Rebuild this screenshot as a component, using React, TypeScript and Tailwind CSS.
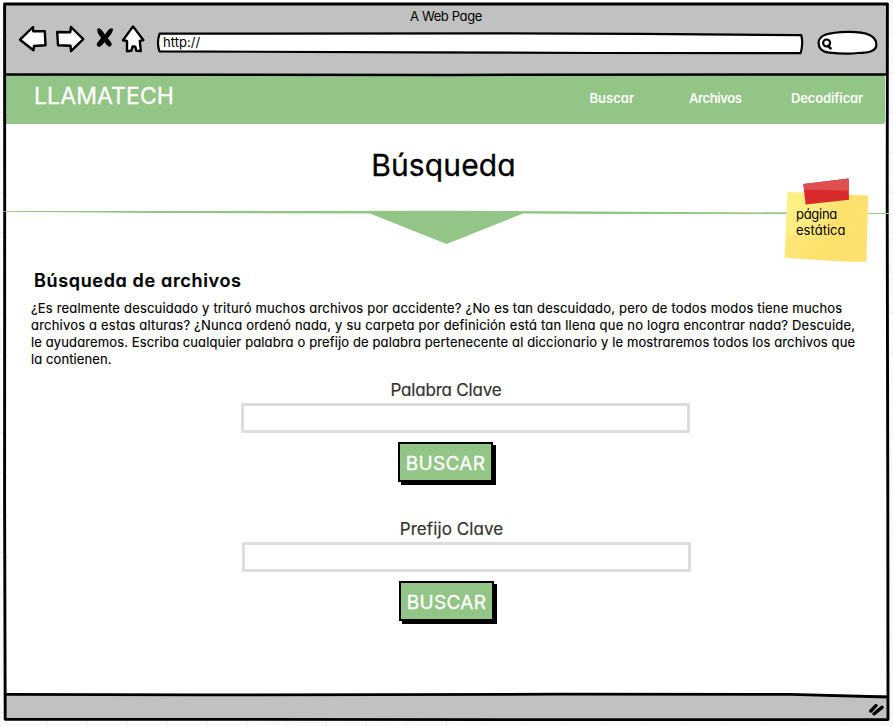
const paragraph = [
  {
    text: "¿Es realmente descuidado y trituró muchos archivos por accidente? ¿No es tan descuidado, pero de todos modos tiene muchos",
    spacing: "tracking-[0.188px]",
  },
  {
    text: "archivos a estas alturas? ¿Nunca ordenó nada, y su carpeta por definición está tan llena que no logra encontrar nada? Descuide,",
    spacing: "tracking-[0.198px]",
  },
  {
    text: "le ayudaremos. Escriba cualquier palabra o prefijo de palabra pertenecente al diccionario y le mostraremos todos los archivos que",
    spacing: "tracking-[0.125px]",
  },
  { text: "la contienen.", spacing: "tracking-[0.1px]" },
];

/* Hand-drawn ink: window outline, header rule and footer rule */
function FrameInk() {
  return (
    <svg
      className="pointer-events-none absolute inset-0"
      width="893"
      height="726"
      viewBox="0 0 893 726"
      fill="none"
      stroke="#000"
      strokeLinejoin="round"
    >
      <path d="M4.6 4 L450 4 L887.4 3.9 L887.2 200 L887.8 500 L888 719.6 L500 719.6 L5.2 719.2 L4.6 500 L4.7 200 Z" strokeWidth="2.9" />
      <path d="M5 74.6 L450 74.9 L887 74.5" strokeWidth="2.5" />
      <path d="M5 694.4 L200 694.9 L560 694.2 L790 694.4 L888 697" strokeWidth="2.8" />
    </svg>
  );
}

function NavIcons() {
  return (
    <svg
      width="130"
      height="32"
      viewBox="17 24 130 32"
      fill="#fff"
      stroke="#000"
      strokeWidth="2.4"
      strokeLinejoin="round"
      strokeLinecap="round"
      className="shrink-0"
    >
      <path d="M20 39.7 L33 27 L33.2 31.2 L44.8 31.2 L45.5 45.3 L34 46 L33.4 50.3 Z" />
      <path d="M57.2 32 L70.2 32.2 L71 27 L83.3 39.2 L71 51.2 L70.5 45.8 L58 45.2 Z" />
      <path
        stroke="none"
        fill="#000"
        d="M97.3 28.8 Q100 27.2 102.4 31 L105 34.6 L108.3 30 Q110.5 27.4 113 28.7 Q113.4 32 107.8 38.2 L111.5 43 Q112.2 45.9 109.6 46.7 Q107 46.4 104.6 42 Q101.5 46.4 98.8 46.9 Q96.2 45.9 97 43.2 L101.1 38 Q96.4 32 97.3 28.8 Z"
      />
      <path d="M133 26.4 L143.3 40 L139.8 41 L140.8 51 L136.3 50.8 L135.3 46.6 L132.6 46.4 L131.3 50.8 L127 51.3 L127 41 L123 40.2 Z" />
    </svg>
  );
}

function AddressBar() {
  return (
    <div className="relative ml-[9px] mt-[7px] flex h-[24px] w-[648px] items-start">
      <svg className="absolute inset-0" width="648" height="24" viewBox="156 31 648 24" fill="#fff" stroke="#000" strokeWidth="2.2" strokeLinejoin="round">
        <path d="M159.6 33.6 L500 33.4 L640 33.8 L801.3 35.2 Q803.4 44 800.6 53.2 L600 53 L420 52.3 L159.5 51.4 Q156.4 43 159.6 33.6 Z" />
      </svg>
      <span className="relative ml-[7px] mt-[3px] text-[13px] leading-4 tracking-[0.05px]">http://</span>
    </div>
  );
}

function SearchPill() {
  return (
    <svg className="ml-[12px] mt-[5px] shrink-0" width="62" height="28" viewBox="816 29 62 28" fill="#fff" stroke="#000" strokeWidth="2.2" strokeLinecap="round">
      <path d="M818.6 43 C818.6 35 828 32.3 848 31.8 C868 31.6 876 36 876.3 44 C877 51.5 868 52.6 858 53 C850 54 838 53.6 829 52.6 C821.5 51.8 818.6 48 818.6 43 Z" />
      <circle cx="826.6" cy="43" r="3.5" />
      <path d="M828 46 L830.6 48.4" strokeWidth="2.6" />
    </svg>
  );
}

function Divider() {
  return (
    <svg className="relative z-10 -ml-[5px] mt-[25px] block shrink-0" width="893" height="36" viewBox="0 210 893 36" fill="#92c586">
      <path d="M3 211 L447 210.8 L889 213 L889 213.9 L600 214 L523 213.6 L446.5 244 L370 213.4 L160 213 L3 211.8 Z" />
    </svg>
  );
}

function StickyNote() {
  return (
    <div className="absolute left-[782px] top-[176px] z-20 h-[90px] w-[90px]">
      <svg className="absolute inset-0" width="90" height="90" viewBox="782 176 90 90">
        <defs>
          <linearGradient id="note" x1="0" y1="0.2" x2="1" y2="0.6">
            <stop offset="0" stopColor="#fff184" />
            <stop offset="0.35" stopColor="#feec7e" />
            <stop offset="0.6" stopColor="#fee16c" />
            <stop offset="1" stopColor="#fee070" />
          </linearGradient>
        </defs>
        <path d="M787.5 192 L868.3 195.6 L866.3 261.8 L845 261.6 L784.6 257.8 Z" fill="url(#note)" />
        <path d="M786.3 235 L822 236 L852 232 L866 242 L866.3 261.8 L845 261.6 L784.6 257.8 Z" fill="#fee06e" opacity="0.6" />
        <path d="M803.3 184 L848.6 178.4 L849 199.8 L805.6 204.6 Z" fill="#db2a2e" />
        <path d="M803.3 184 L848.6 178.4 L848.8 190.5 L804.2 189.8 Z" fill="#df4f4f" />
      </svg>
      <p className="relative ml-[14px] pt-[30px] text-[13px] leading-4">
        <span className="block tracking-[-0.28px]">página</span>
        <span className="block tracking-[0.03px]">estática</span>
      </p>
    </div>
  );
}

function SearchForm({ label, tracking }: { label: string; tracking: string }) {
  return (
    <form className="flex flex-col items-center">
      <label className={`text-[17px] leading-6 text-[#333] [-webkit-text-stroke:0.2px_#333] ${tracking}`}>{label}</label>
      <div className="ml-[39px] mt-px h-[30px] w-[449px] rounded-[1px] border-[3px] border-[#ddd] bg-white" />
      <button
        type="button"
        className="mt-[9px] h-10 w-[95px] border-2 border-black bg-[#92c586] pt-[3px] text-[19px] leading-[33px] tracking-[0.35px] text-white shadow-[3px_3px_0_#000] [-webkit-text-stroke:0.3px_#fff]"
      >
        BUSCAR
      </button>
    </form>
  );
}

export default function App() {
  return (
    <div className="relative h-[726px] w-[893px] overflow-hidden whitespace-nowrap bg-[#fafafa] bg-[linear-gradient(#f1f1f1_1px,transparent_1px),linear-gradient(90deg,#f1f1f1_1px,transparent_1px)] bg-[size:40px_40px] bg-[position:6px_32px] font-['Inter','Open_Sans',sans-serif] text-black [font-feature-settings:'cv11']">
      <div className="ml-[5px] flex h-[720px] w-[882px] flex-col bg-white">
        <header className="mt-1 h-[71px] bg-[#c1c1c1]">
          <h1 className="pt-[4px] text-center text-[13px] leading-4 tracking-[-0.38px]">A Web Page</h1>
          <div className="ml-[12px] flex items-start">
            <NavIcons />
            <AddressBar />
            <SearchPill />
          </div>
        </header>

        <nav className="mr-[2px] flex h-[49px] items-start rounded-r-[2px] bg-[#92c586] pl-[29px] text-white">
          <span className="mt-[7px] w-[555.5px] text-[23px] leading-7 tracking-[0.1px] [-webkit-text-stroke:0.3px_#fff]">LLAMATECH</span>
          <a className="mt-[15px] w-[99.5px] text-[13px] font-semibold leading-4 tracking-[0.02px]">Buscar</a>
          <a className="mt-[15px] w-[102px] text-[13px] font-semibold leading-4 tracking-[-0.4px]">Archivos</a>
          <a className="mt-[15px] text-[13px] font-semibold leading-4 tracking-[-0.12px]">Decodificar</a>
        </nav>

        <h2 className="mt-[21px] pr-[5px] text-center text-[30px] leading-[40px] tracking-[0.15px] [-webkit-text-stroke:0.3px_#000]">Búsqueda</h2>
        <Divider />
        <h3 className="ml-[29px] mt-[23px] text-[18px] font-semibold leading-6 tracking-[0.66px] [-webkit-text-stroke:0.2px_#000]">Búsqueda de archivos</h3>
        <p className="mt-[7px] pl-[26px] text-[13px] leading-[17px] [-webkit-text-stroke:0.15px_#000]">
          {paragraph.map((line) => (
            <span key={line.text} className={`block ${line.spacing}`}>
              {line.text}
            </span>
          ))}
        </p>
        <div className="mt-[10px] pr-px">
          <SearchForm label="Palabra Clave" tracking="tracking-[-0.2px] pl-px" />
        </div>
        <div className="mt-[35px] pl-px">
          <SearchForm label="Prefijo Clave" tracking="tracking-[0.08px] pl-[10px]" />
        </div>
        <footer className="mt-auto flex h-[25px] shrink-0 items-end justify-end bg-[#c1c1c1] pr-[2px]">
          <svg width="18" height="16" viewBox="867 704 18 16" stroke="#000" strokeWidth="3.4" strokeLinecap="round">
            <path d="M870.8 711 L876 705.6 M874 713.8 L882 707.4" />
          </svg>
        </footer>
      </div>

      <FrameInk />
      <StickyNote />
    </div>
  );
}
